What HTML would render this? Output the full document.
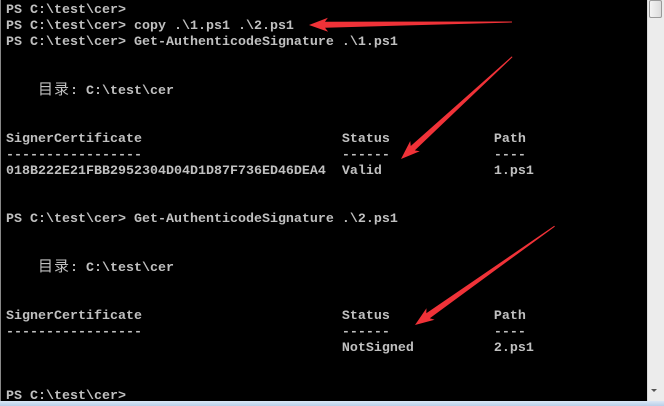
<!DOCTYPE html>
<html><head><meta charset="utf-8"><style>
html,body{margin:0;padding:0;background:#000;width:664px;height:406px;overflow:hidden;position:relative}
pre{position:absolute;left:6px;top:3px;margin:0;font-family:"Liberation Mono","Noto Sans CJK SC",monospace;font-size:13.33px;line-height:16px;color:#c0c0c0;font-weight:bold;white-space:pre}
.c{display:inline-block;width:16px;font-weight:normal;font-size:15px}
.sb{position:absolute;left:647px;top:0;width:17px;height:401px;background:#ececec;border-left:1px solid #d8d8d8}
.th{position:absolute;left:649px;top:0;width:13px;height:18px;background:linear-gradient(90deg,#f4f4f4,#dcdcdc);border:1px solid #999;border-radius:2px;box-sizing:border-box}
.bot{position:absolute;left:0;top:401px;width:664px;height:5px;background:linear-gradient(#dbe7f5,#b9cfe8)}
.lft{position:absolute;left:0;top:0;width:1px;height:401px;background:#888}
</style></head><body>
<pre>PS C:\test\cer>
PS C:\test\cer> copy .\1.ps1 .\2.ps1
PS C:\test\cer> Get-AuthenticodeSignature .\1.ps1


    <span class="c">目</span><span class="c">录</span>: C:\test\cer


SignerCertificate                         Status             Path
-----------------                         ------             ----
018B222E21FBB2952304D04D1D87F736ED46DEA4  Valid              1.ps1


PS C:\test\cer> Get-AuthenticodeSignature .\2.ps1


    <span class="c">目</span><span class="c">录</span>: C:\test\cer


SignerCertificate                         Status             Path
-----------------                         ------             ----
                                          NotSigned          2.ps1


PS C:\test\cer></pre>
<div class="lft"></div>
<div class="sb"></div><div class="th"></div>
<div style="position:absolute;left:651px;top:389px;width:0;height:0;border-left:3px solid transparent;border-right:3px solid transparent;border-top:3px solid #555"></div>
<div class="bot"></div>
<svg width="664" height="406" style="position:absolute;left:0;top:0">
<g fill="#f03238">
<polygon transform="translate(309,25) rotate(-0.85)" points="0,0 19,-7 16,-3 203,-0.5 203,0.5 16,3 19,7"/>
<polygon transform="translate(401,159) rotate(-42.6)" points="0,0 19,-7 16,-3 151,-0.5 151,0.5 16,3 19,7"/>
<polygon transform="translate(415,325) rotate(-35.3)" points="0,0 19,-7 16,-3 171,-0.5 171,0.5 16,3 19,7"/>
</g></svg>
</body></html>
